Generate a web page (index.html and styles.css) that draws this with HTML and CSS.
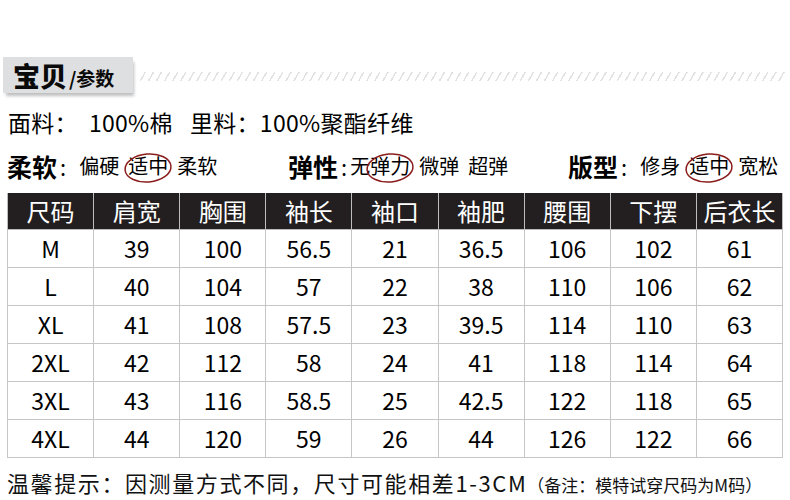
FILE: index.html
```html
<!DOCTYPE html>
<html lang="zh">
<head>
<meta charset="utf-8">
<link rel="stylesheet" href="styles.css">
</head>
<body>
<div class="page">
  <div class="title-row">
    <div class="banner"><span class="big">宝贝</span><span class="small">/参数</span></div>
    <div class="stripes"></div>
  </div>
  <div class="fabric"><span class="lbl">面料</span>：<span class="val">100%棉</span><span class="lbl gap">里料</span>：100%聚酯纤维</div>
  <div class="props">
    <div class="group g1"><span class="key">柔软</span><span class="colon">:</span><span class="opt">偏硬</span><span class="opt circ">适中<svg class="ring" viewBox="0 0 50 32"><ellipse cx="25" cy="16" rx="23" ry="14" transform="rotate(-5 25 16)"/></svg></span><span class="opt">柔软</span></div>
    <div class="group g2"><span class="key">弹性</span><span class="colon">:</span><span class="opt tight">无</span><span class="opt circ">弹力<svg class="ring" viewBox="0 0 50 32"><ellipse cx="25" cy="16" rx="23" ry="14" transform="rotate(-5 25 16)"/></svg></span><span class="opt">微弹</span><span class="opt">超弹</span></div>
    <div class="group g3"><span class="key">版型</span><span class="colon">:</span><span class="opt">修身</span><span class="opt circ">适中<svg class="ring" viewBox="0 0 50 32"><ellipse cx="25" cy="16" rx="23" ry="14" transform="rotate(-5 25 16)"/></svg></span><span class="opt">宽松</span></div>
  </div>
  <table class="size">
    <thead>
      <tr><th>尺码</th><th>肩宽</th><th>胸围</th><th>袖长</th><th>袖口</th><th>袖肥</th><th>腰围</th><th>下摆</th><th>后衣长</th></tr>
    </thead>
    <tbody>
      <tr><td>M</td><td>39</td><td>100</td><td>56.5</td><td>21</td><td>36.5</td><td>106</td><td>102</td><td>61</td></tr>
      <tr><td>L</td><td>40</td><td>104</td><td>57</td><td>22</td><td>38</td><td>110</td><td>106</td><td>62</td></tr>
      <tr><td>XL</td><td>41</td><td>108</td><td>57.5</td><td>23</td><td>39.5</td><td>114</td><td>110</td><td>63</td></tr>
      <tr><td>2XL</td><td>42</td><td>112</td><td>58</td><td>24</td><td>41</td><td>118</td><td>114</td><td>64</td></tr>
      <tr><td>3XL</td><td>43</td><td>116</td><td>58.5</td><td>25</td><td>42.5</td><td>122</td><td>118</td><td>65</td></tr>
      <tr><td>4XL</td><td>44</td><td>120</td><td>59</td><td>26</td><td>44</td><td>126</td><td>122</td><td>66</td></tr>
    </tbody>
  </table>
  <div class="note">温馨提示：因测量方式不同，尺寸可能相差1-3CM<span class="remark">（备注：模特试穿尺码为M码）</span></div>
</div>
</body>
</html>
```
FILE: styles.css
```css
html, body {
  margin: 0;
  padding: 0;
  background: #ffffff;
}
body {
  width: 790px;
  height: 500px;
  overflow: hidden;
  font-family: "Noto Sans CJK SC", "Noto Sans", sans-serif;
  color: #111;
}
.page {
  padding-top: 57px;
}
.title-row {
  display: flex;
  align-items: center;
  height: 36px;
}
.banner {
  margin-left: 3px;
  width: 130px;
  height: 36px;
  background: #dedfe1;
  box-shadow: 2px 4px 3px -1px rgba(0,0,0,0.25);
  display: flex;
  align-items: center;
  padding-left: 10px;
  box-sizing: border-box;
  color: #0a0a0a;
  white-space: nowrap;
}
.banner .big {
  font-size: 27px;
  font-weight: 900;
  letter-spacing: 0;
  line-height: 1;
}
.banner .small {
  font-size: 19px;
  font-weight: 700;
  line-height: 1;
  margin-top: 5px;
  margin-left: 2px;
}
.stripes {
  margin-left: 7px;
  width: 645px;
  height: 9px;
  margin-top: 2px;
  background: repeating-linear-gradient(120deg, transparent 0 4px, #e2e2e2 4px 5.5px, transparent 5.5px 7px);
}
.fabric {
  margin-top: 13px;
  margin-left: 8px;
  height: 32px;
  font-size: 23px;
  line-height: 32px;
  letter-spacing: 0.3px;
  color: #000;
  white-space: nowrap;
}
.fabric .val {
  margin-left: 11px;
}
.fabric .gap {
  margin-left: 17px;
}
.props {
  display: flex;
  margin-top: 13px;
  height: 30px;
  align-items: center;
  font-size: 20px;
  line-height: 30px;
  color: #000;
}
.group {
  display: flex;
  align-items: center;
  white-space: nowrap;
}
.g1 { margin-left: 7px; width: 281px; }
.g2 { width: 280px; }
.key {
  font-size: 25px;
  font-weight: 700;
}
.colon {
  font-size: 22px;
  margin: 0 13px 0 3px;
}
.g2 .colon { margin-right: 3px; }
.opt {
  margin-right: 9px;
}
.opt.tight { margin-right: 0; }
.circ {
  position: relative;
  display: inline-block;
}
.ring {
  position: absolute;
  left: -5px;
  top: 0;
  width: 50px;
  height: 34px;
  fill: none;
  stroke: #8a1c1c;
  stroke-width: 1.5;
  overflow: visible;
}
.size {
  margin: 12px 0 0 7px;
  width: 776px;
  border-collapse: collapse;
  table-layout: fixed;
}
.size th {
  background: #231f20;
  color: #fff;
  font-weight: 400;
  font-size: 24px;
  height: 36px;
  padding: 0;
  line-height: 36px;
  border: 1px solid #bdbdbd;
  border-top: none;
}
.size td {
  height: 37px;
  padding: 0;
  text-align: center;
  font-size: 23px;
  line-height: 37px;
  border: 1px solid #c6c6c6;
  color: #000;
}
.note {
  margin: 9px 0 0 7px;
  font-size: 22px;
  line-height: 30px;
  letter-spacing: 1.6px;
  white-space: nowrap;
  color: #111;
}
.remark {
  font-size: 17px;
  letter-spacing: 0;
}
```
